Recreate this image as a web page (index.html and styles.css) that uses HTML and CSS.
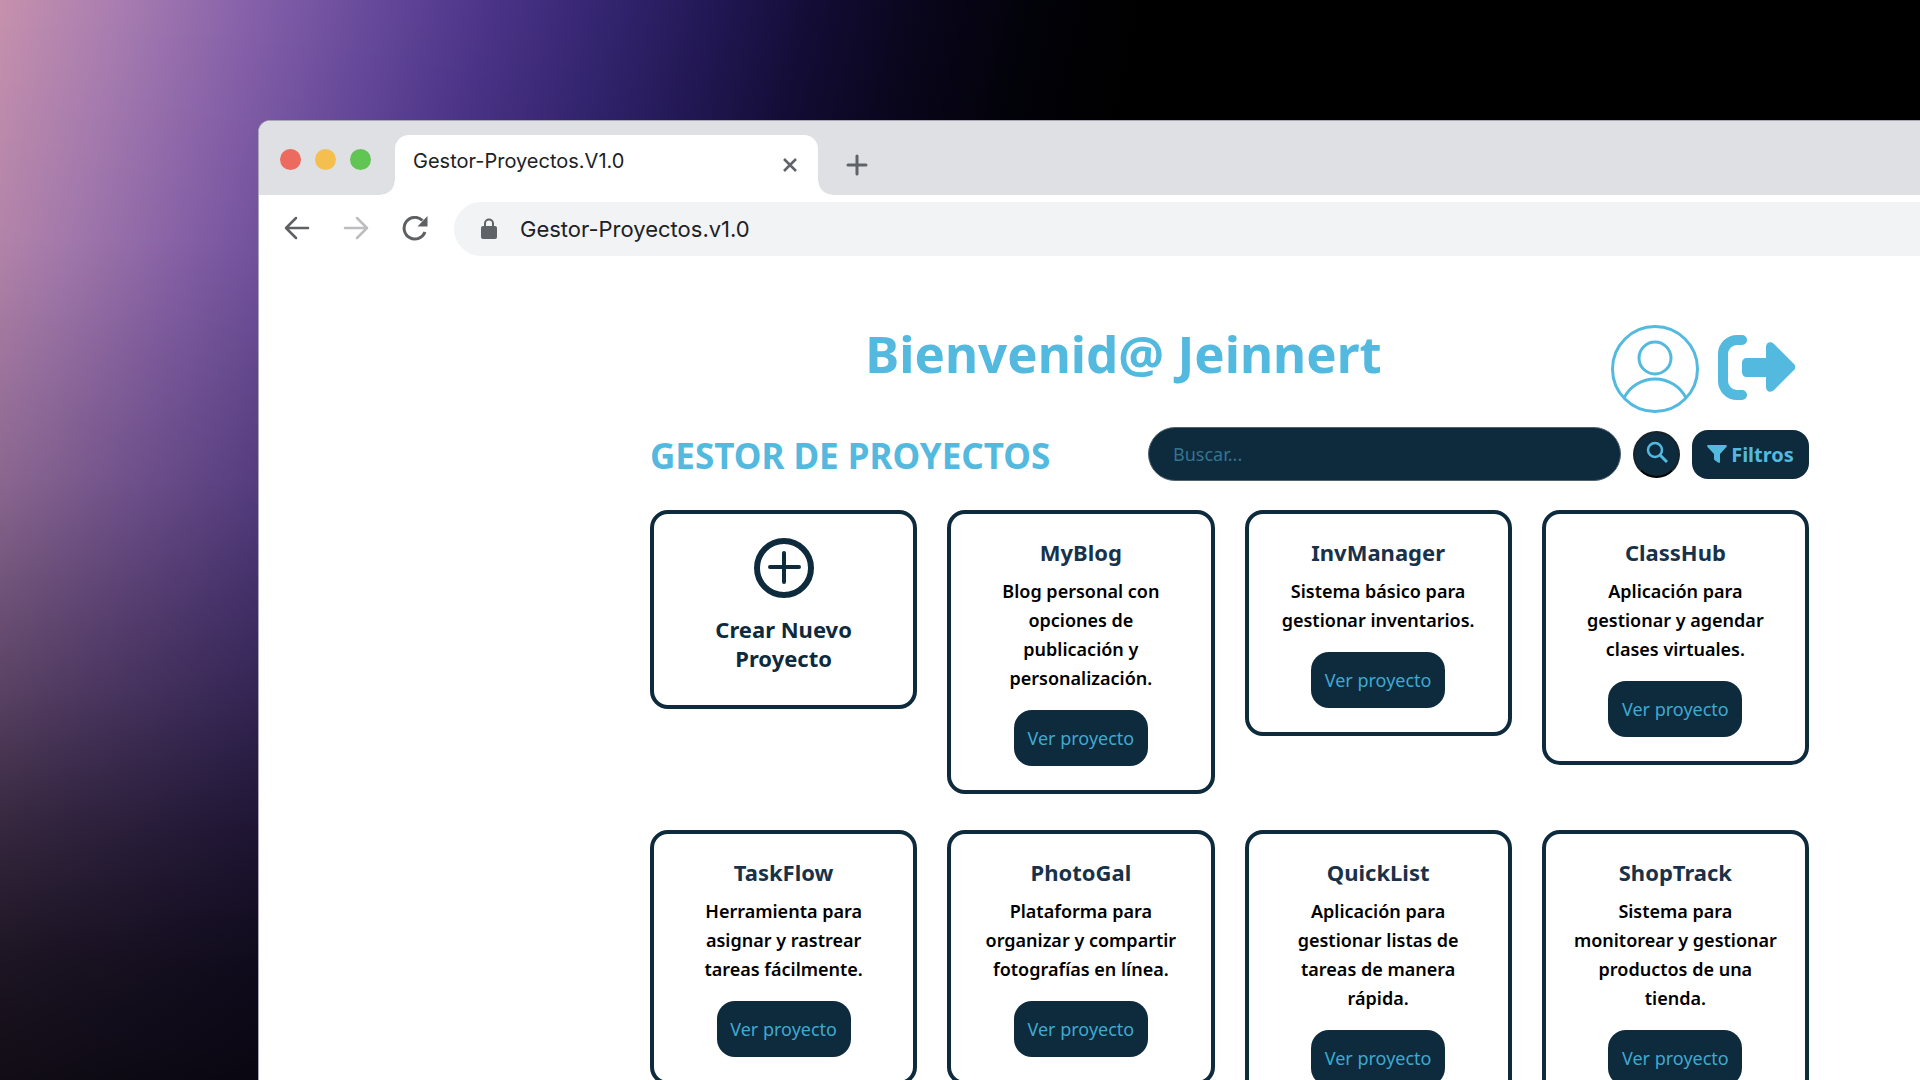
FILE: index.html
```html
<!DOCTYPE html>
<html lang="es">
<head>
<meta charset="utf-8">
<meta name="viewport" content="width=device-width, initial-scale=1">
<title>Gestor-Proyectos.V1.0</title>
<link rel="stylesheet" href="styles.css">
</head>
<body>
<div class="backdrop">
  <div class="window">
    <div class="tabstrip">
      <div class="lights"><span class="light red"></span><span class="light yellow"></span><span class="light green"></span></div>
      <div class="tab">
        <span class="tab-title">Gestor-Proyectos.V1.0</span>
        <button class="icon-button" type="button" aria-label="Cerrar"><svg width="14" height="14" viewBox="0 0 14 14" fill="none" stroke="#5f6368" stroke-width="2.500"><path d="M1 1l12 12M13 1L1 13"/></svg></button>
      </div>
      <button class="icon-button new-tab" type="button" aria-label="Nueva"><svg width="22" height="22" viewBox="0 0 22 22" fill="none" stroke="#5f6368" stroke-width="3" stroke-linecap="round"><path d="M11 2v18M2 11h18"/></svg></button>
    </div>
    <div class="toolbar">
      <button class="icon-button" type="button" aria-label="Atrás"><svg width="26" height="26" viewBox="0 0 26 26" fill="none" stroke="#5f6063" stroke-width="2.500" stroke-linecap="round" stroke-linejoin="round"><path d="M24 12H2M12 2L2 12l10 10"/></svg></button>
      <button class="icon-button" type="button" aria-label="Adelante"><svg width="26" height="26" viewBox="0 0 26 26" fill="none" stroke="#bdbdbf" stroke-width="2.500" stroke-linecap="round" stroke-linejoin="round"><path d="M2 12h22M14 2l10 10-10 10"/></svg></button>
      <button class="icon-button" type="button" aria-label="Recargar"><svg width="26" height="26" viewBox="0 0 26 26"><path d="M23 16a10.800 10.800 0 1 1-2.500-11.500" fill="none" stroke="#5f6063" stroke-width="3"/><path d="M25.500 0v10.500h-10z" fill="#5f6063"/></svg></button>
      <div class="address">
        <svg width="16" height="22" viewBox="0 0 16 22"><path d="M4 9V5.500a4 4 0 0 1 8 0V9" fill="none" stroke="#5f6368" stroke-width="2"/><rect x="0" y="8" width="16" height="13" rx="2" fill="#5f6368"/></svg>
        <span>Gestor-Proyectos.v1.0</span>
      </div>
    </div>
    <main class="page">
      <header class="welcome">
        <h1>Bienvenid@ Jeinnert</h1>
        <svg width="88" height="88" viewBox="0 0 88 88" fill="none" stroke="#53b9de" stroke-width="3"><circle cx="44" cy="44" r="42.500"/><circle cx="44" cy="33" r="16"/><path d="M13 73C19 61 31 54 44 54s25 7 31 19"/></svg>
        <a class="logout" href="#" aria-label="Salir"><svg width="78" height="68" viewBox="0 0 78 68"><path d="M25 5H20A14 14 0 0 0 6 19v27a14 14 0 0 0 14 14h5" fill="none" stroke="#53b9de" stroke-width="10" stroke-linecap="round"/><path d="M30 23h19V12c0-5 5-6 8-3l20 20c2 2 2 4 0 6L57 55c-3 3-8 2-8-3V42H30c-3 0-5-2-5-5v-9c0-3 2-5 5-5z" fill="#53b9de"/></svg></a>
      </header>
      <div class="controls">
        <h2>GESTOR DE PROYECTOS</h2>
        <form class="search">
          <input type="search" placeholder="Buscar..." aria-label="Buscar">
          <button class="search-button" type="button" aria-label="Buscar proyectos"><svg width="22" height="22" viewBox="0 0 22 22" fill="none" stroke="#53b9de" stroke-width="2.500"><circle cx="9" cy="9" r="7"/><path d="M14 14l7 7" stroke-width="3"/></svg></button>
          <button class="filter-button" type="button"><svg width="20" height="18" viewBox="0 0 20 18"><path d="M1 0h18c1 0 1 1 .500 2L13 9v8c0 1-1 1-2 .500L7.500 15c-.500-.500-.500-1-.500-1V9L.500 2C0 1 0 0 1 0z" fill="#53b9de"/></svg>Filtros</button>
        </form>
      </div>
      <section class="grid">
        <a class="card create" href="#">
          <svg width="60" height="60" viewBox="0 0 60 60" fill="none" stroke="#0e2a3d"><circle cx="30" cy="30" r="27" stroke-width="6"/><path d="M30 15v29M16 29h29" stroke-width="4" stroke-linecap="round"/></svg>
          <h3>Crear Nuevo Proyecto</h3>
        </a>
        <article class="card"><h3>MyBlog</h3><p>Blog personal con opciones de publicación y personalización.</p><button class="view" type="button">Ver proyecto</button></article>
        <article class="card"><h3>InvManager</h3><p>Sistema básico para gestionar inventarios.</p><button class="view" type="button">Ver proyecto</button></article>
        <article class="card"><h3>ClassHub</h3><p>Aplicación para gestionar y agendar clases virtuales.</p><button class="view" type="button">Ver proyecto</button></article>
        <article class="card"><h3>TaskFlow</h3><p>Herramienta para asignar y rastrear tareas fácilmente.</p><button class="view" type="button">Ver proyecto</button></article>
        <article class="card"><h3>PhotoGal</h3><p>Plataforma para organizar y compartir fotografías en línea.</p><button class="view" type="button">Ver proyecto</button></article>
        <article class="card"><h3>QuickList</h3><p>Aplicación para gestionar listas de tareas de manera rápida.</p><button class="view" type="button">Ver proyecto</button></article>
        <article class="card"><h3>ShopTrack</h3><p>Sistema para monitorear y gestionar productos de una tienda.</p><button class="view" type="button">Ver proyecto</button></article>
      </section>
    </main>
  </div>
</div>
</body>
</html>
```
FILE: styles.css
```css
:root {
  --sky: #53b9de;
  --navy: #0e2a3d;
  --strip: #dee0e4;
  --ui: "Noto Sans", "Open Sans", sans-serif;
}

* { box-sizing: border-box; }
body, h1, h2, h3, p { margin: 0; }
body { background: #000; font-family: var(--ui); }
svg { display: block; flex: none; }
button { border: 0; cursor: pointer; font-family: inherit; }

.backdrop {
  height: 100vh;
  overflow: hidden;
  padding: 120px 0 0 258px;
  background:
    linear-gradient(180deg, rgba(0,0,0,0) 0, rgba(0,0,0,.03) 240px, rgba(0,0,0,.19) 482px, rgba(0,0,0,.43) 689px, rgba(0,0,0,.64) 826px, rgba(0,0,0,.8) 964px, rgba(0,0,0,.87) 1080px),
    linear-gradient(103deg, #c691ad 0, #a67bb0 125px, #8560a9 248px, #65489a 370px, #4c3488 475px, #33246f 595px, #211753 700px, #130c35 796px, #0a061d 892px, #020209 1010px, #000 1120px);
}

.window {
  height: 100%;
  overflow: hidden;
  background: #fff;
  border: 1px solid #aaa6b5;
  border-width: 1px 0 0 1px;
  border-radius: 12px 0 0 0;
}

/* Browser chrome */
.tabstrip {
  display: flex;
  align-items: flex-end;
  height: 74px;
  background: var(--strip);
  font-family: Inter, sans-serif;
}
.lights {
  display: flex;
  align-items: center;
  gap: 14px;
  width: 136px;
  height: 74px;
  padding: 2px 0 0 21px;
}
.light { width: 21px; height: 21px; border-radius: 50%; }
.red { background: #ed6a5e; }
.yellow { background: #f5bf4f; }
.green { background: #61c554; }
.tab {
  position: relative;
  display: flex;
  align-items: center;
  justify-content: space-between;
  width: 423px;
  height: 60px;
  padding: 0 21px 0 18px;
  background: #fff;
  border-radius: 14px 14px 0 0;
}
.tab::before, .tab::after {
  content: "";
  position: absolute;
  bottom: 0;
  width: 14px;
  height: 14px;
}
.tab::before { right: 100%; background: radial-gradient(circle at 0 0, var(--strip) 13px, #fff 14px); }
.tab::after { left: 100%; background: radial-gradient(circle at 100% 0, var(--strip) 13px, #fff 14px); }
.tab-title { padding-bottom: 8px; font-size: 20px; line-height: 24px; color: #202124; }
.icon-button { padding: 0; background: none; }
.new-tab { margin: 0 0 19px 28px; }
.toolbar {
  display: flex;
  align-items: center;
  gap: 33px;
  height: 68px;
  padding-left: 25px;
}
.address {
  display: flex;
  flex: 1;
  align-items: center;
  gap: 23px;
  height: 54px;
  margin-left: -7px;
  padding-left: 27px;
  background: #f1f3f5;
  border-radius: 27px 0 0 27px;
  color: #202124;
  font: 22px/28px Inter, sans-serif;
}

/* Page */
.page { padding: 61px 111px 0 391px; }
.welcome { display: flex; align-items: center; gap: 18px; height: 90px; }
.welcome h1 {
  flex: 1;
  padding: 0 0 32px 4px;
  color: var(--sky);
  font-size: 51px;
  line-height: 68px;
  text-align: center;
}
.logout { margin-right: 14px; }
.controls { display: flex; align-items: center; justify-content: space-between; gap: 24px; padding-top: 12px; }
h2 { color: var(--sky); font-size: 35px; line-height: 52px; font-weight: 700; padding-top: 4px; white-space: nowrap; }
.search { display: flex; align-items: center; gap: 12px; width: 661px; }
.search input {
  flex: 1;
  min-width: 0;
  height: 54px;
  padding: 0 24px;
  border: 1px solid #52646f;
  border-radius: 27px;
  background: var(--navy);
  color: var(--sky);
  font: 18px/24px var(--ui);
}
.search input::placeholder { color: #34748f; opacity: 1; }
.search-button {
  display: grid;
  place-items: center;
  width: 47px;
  height: 47px;
  padding: 0 0 4px;
  border: 2px solid #18222a;
  border-bottom-color: #000;
  border-radius: 50%;
  background: var(--navy);
}
.filter-button {
  display: flex;
  align-items: center;
  justify-content: center;
  gap: 4px;
  width: 117px;
  height: 49px;
  padding: 0;
  border-radius: 16px;
  background: var(--navy);
  color: var(--sky);
  font-size: 20px;
  font-weight: 700;
}
.grid {
  display: grid;
  grid-template-columns: repeat(4, minmax(0, 1fr));
  align-items: start;
  gap: 36px 30px;
  padding-top: 28px;
}
.card {
  display: flex;
  flex-direction: column;
  align-items: center;
  padding: 24px 26px;
  border: 4px solid var(--navy);
  border-radius: 18px;
  text-align: center;
  text-decoration: none;
}
.card h3 { color: #17324a; font-size: 22px; line-height: 29px; font-weight: 700; }
.card p { margin: 10px 0 17px; color: #000; font-size: 18px; line-height: 29px; font-weight: 600; }
.create { padding: 24px 40px 32px; }
.create h3 { padding-top: 17px; color: var(--navy); }
.view {
  width: 134px;
  height: 56px;
  padding: 0;
  border-radius: 18px;
  background: var(--navy);
  color: #3fa9cf;
  font-size: 18px;
}
```
